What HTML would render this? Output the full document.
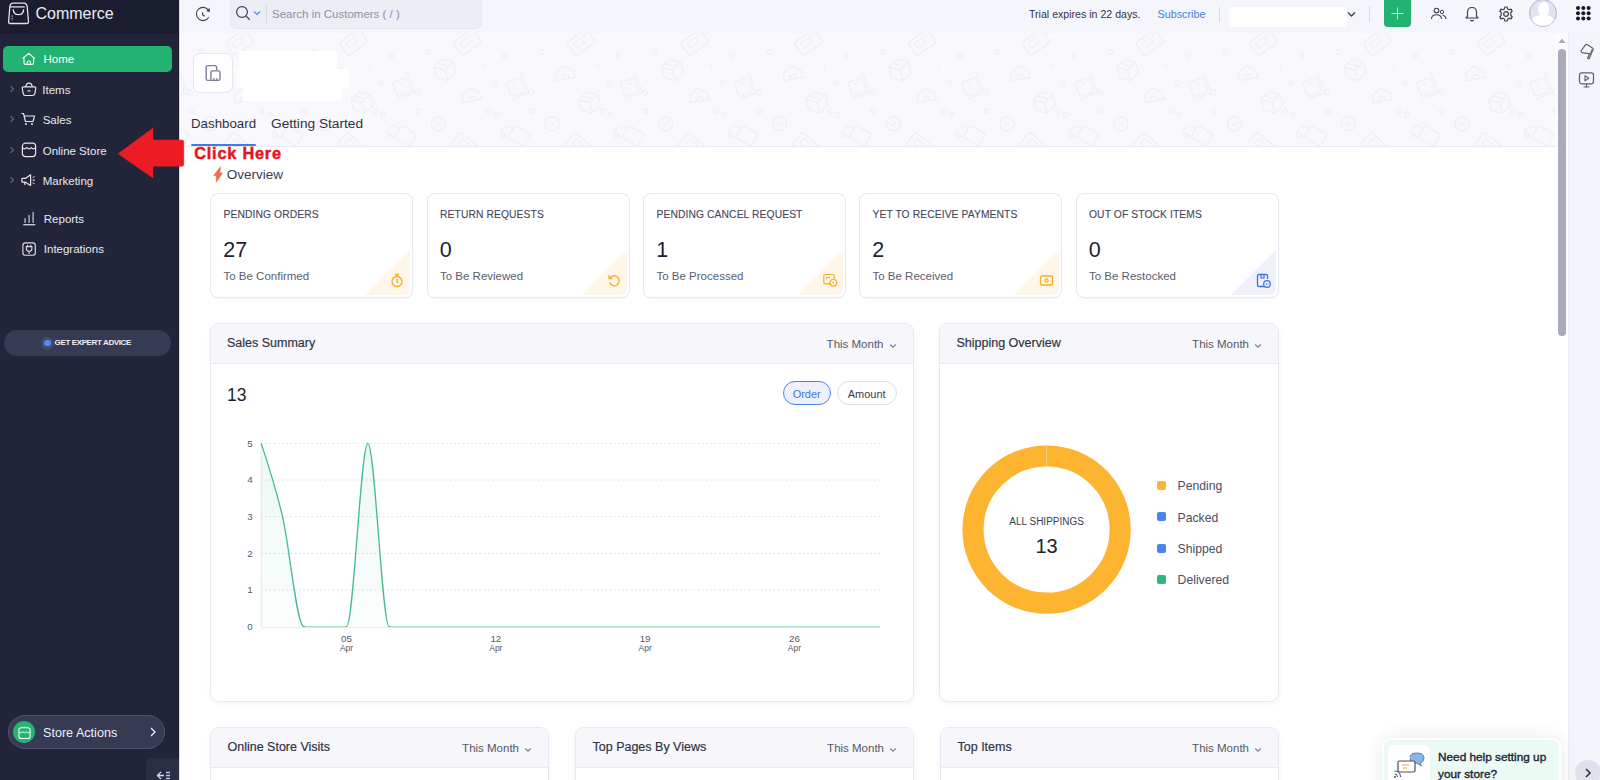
<!DOCTYPE html>
<html><head><meta charset="utf-8"><style>
html,body{margin:0;padding:0;width:1600px;height:780px;overflow:hidden;background:#fff;font-family:"Liberation Sans", sans-serif;}
.t{position:absolute;line-height:1;white-space:nowrap;}
svg{display:block}
</style></head><body>
<div style="position:absolute;left:180px;top:0px;width:1420px;height:33px;background:#f5f6fb;"></div><div style="position:absolute;left:180px;top:33px;width:1388px;height:114px;background:#f9f9fd;"></div><div style="position:absolute;left:180px;top:146px;width:1376px;height:1px;background:#e9eaf2;"></div><div style="position:absolute;left:1568px;top:33px;width:32px;height:747px;background:#f4f5fb;"></div><div style="position:absolute;left:1568px;top:33px;width:1px;height:747px;background:#ebecf3;"></div><div style="position:absolute;left:0px;top:0px;width:179px;height:780px;background:#22253a;"></div><div style="position:absolute;left:0px;top:0px;width:179px;height:34px;background:#1a1c2f;"></div><div style="position:absolute;left:178px;top:0px;width:1px;height:780px;background:#171a2b;"></div><div style="position:absolute;left:179px;top:0px;width:1px;height:780px;background:#dcdee6;"></div><svg style="position:absolute;left:4px;top:0px;" width="30" height="28" viewBox="0 0 30 28" fill="none"><path d="M5.8 6.9 Q6.2 3.1 9.2 3.1 H20 Q22.6 3.1 23.2 6.5 L24.5 21.7 Q24.6 23.5 22.7 23.5 H6.2 Q4.4 23.5 4.6 21.7 L5.8 6.9" stroke="#dfe0e8" stroke-width="1.3" stroke-linejoin="round"/><path d="M5.8 6.9 H20.8" stroke="#dfe0e8" stroke-width="1.3"/><path d="M9.2 9.2 Q9.4 14.6 14.5 14.6 Q19.6 14.6 19.6 9.2" stroke="#dfe0e8" stroke-width="1.3"/><path d="M8.1 15.4 V20.8" stroke="#dfe0e8" stroke-width="1" stroke-dasharray="1.3 1.2"/></svg><div class="t" style="left:35.5px;top:6.26px;font-size:16px;color:#eceef3;font-weight:400;">Commerce</div><div style="position:absolute;left:3px;top:46px;width:169px;height:26px;background:#24b273;border-radius:5px;"></div><svg style="position:absolute;left:22px;top:52px;" width="14" height="14" viewBox="0 0 14 14" fill="none"><path d="M0.9 6.2 L6.8 1.4 L12.4 6.2" stroke="#f2fbf6" stroke-width="1.15" stroke-linejoin="round" stroke-linecap="round"/><path d="M2 5.4 V10.8 Q2 12.4 3.6 12.4 H10 Q11.6 12.4 11.6 10.8 V5.4" stroke="#f2fbf6" stroke-width="1.15"/><path d="M5.2 12.4 V10.6 Q5.2 9 6.8 9 Q8.4 9 8.4 10.6 V12.4" stroke="#f2fbf6" stroke-width="1.1"/></svg><div class="t" style="left:43.5px;top:54.07px;font-size:11.5px;color:#ffffff;font-weight:400;">Home</div><svg style="position:absolute;left:9px;top:85px;" width="6" height="8" viewBox="0 0 6 8" fill="none"><path d="M1.5 1 L4.5 4 L1.5 7" stroke="#8b8ea3" stroke-width="1"/></svg><svg style="position:absolute;left:20.5px;top:82px;" width="16" height="15" viewBox="0 0 16 15" fill="none"><path d="M1.2 6 Q1.2 4.8 2.4 4.8 H13.6 Q14.8 4.8 14.8 6 L13.8 11.6 Q13.4 13.5 11.6 13.5 H4.4 Q2.6 13.5 2.2 11.6 Z" stroke="#e6e7ee" stroke-width="1.2" stroke-linejoin="round"/><path d="M4.8 4.8 Q5.2 1.2 8 1.2 Q10.8 1.2 11.2 4.8" stroke="#e6e7ee" stroke-width="1.2"/><path d="M6.6 8.9 H9.4" stroke="#e6e7ee" stroke-width="1.2"/></svg><div class="t" style="left:42.3px;top:84.57px;font-size:11.5px;color:#e8e9ef;font-weight:400;">Items</div><svg style="position:absolute;left:9px;top:115px;" width="6" height="8" viewBox="0 0 6 8" fill="none"><path d="M1.5 1 L4.5 4 L1.5 7" stroke="#8b8ea3" stroke-width="1"/></svg><svg style="position:absolute;left:21px;top:112px;" width="15" height="14" viewBox="0 0 15 14" fill="none"><path d="M0.5 1.5 H2.5 L4.5 9.5 H12 L13.5 4 H3.5" stroke="#e6e7ee" stroke-width="1.2" stroke-linejoin="round"/><circle cx="5" cy="12" r="1" fill="#e6e7ee"/><circle cx="11" cy="12" r="1" fill="#e6e7ee"/></svg><div class="t" style="left:42.7px;top:115.07px;font-size:11.5px;color:#e8e9ef;font-weight:400;">Sales</div><svg style="position:absolute;left:9px;top:146px;" width="6" height="8" viewBox="0 0 6 8" fill="none"><path d="M1.5 1 L4.5 4 L1.5 7" stroke="#8b8ea3" stroke-width="1"/></svg><svg style="position:absolute;left:20.5px;top:142px;" width="16" height="16" viewBox="0 0 16 16" fill="none"><rect x="1.4" y="1.2" width="13.2" height="13.4" rx="3" stroke="#e6e7ee" stroke-width="1.2"/><path d="M1.4 5.6 Q3.6 8.2 5.8 5.6 Q8 8.2 10.2 5.6 Q12.4 8.2 14.6 5.6" stroke="#e6e7ee" stroke-width="1.1"/></svg><div class="t" style="left:42.7px;top:146.07px;font-size:11.5px;color:#e8e9ef;font-weight:400;">Online Store</div><svg style="position:absolute;left:9px;top:176px;" width="6" height="8" viewBox="0 0 6 8" fill="none"><path d="M1.5 1 L4.5 4 L1.5 7" stroke="#8b8ea3" stroke-width="1"/></svg><svg style="position:absolute;left:21px;top:173px;" width="16" height="14" viewBox="0 0 16 14" fill="none"><path d="M1.6 5.4 H4.4 L9.6 1.8 V12.6 L4.4 9.2 H1.6 Q0.9 9.2 0.9 8.5 V6.1 Q0.9 5.4 1.6 5.4 Z" stroke="#e6e7ee" stroke-width="1.2" stroke-linejoin="round"/><path d="M3.2 9.2 L4.2 12" stroke="#e6e7ee" stroke-width="1.1"/><path d="M11.6 4.6 L13.6 3.6 M11.6 7.2 H14 M11.6 9.8 L13.6 10.8" stroke="#e6e7ee" stroke-width="1"/></svg><div class="t" style="left:42.7px;top:176.07px;font-size:11.5px;color:#e8e9ef;font-weight:400;">Marketing</div><svg style="position:absolute;left:21.5px;top:211px;" width="15" height="15" viewBox="0 0 15 15" fill="none"><path d="M3.1 11.5 V7.6 M7.1 11.5 V4.3 M11.1 11.5 V1.2" stroke="#d9dbe6" stroke-width="1.1" stroke-linecap="round"/><path d="M1.3 13.7 H13.2" stroke="#d9dbe6" stroke-width="1.3"/></svg><div class="t" style="left:43.8px;top:214.27px;font-size:11.5px;color:#e8e9ef;font-weight:400;">Reports</div><svg style="position:absolute;left:21.6px;top:241.6px;" width="15" height="15" viewBox="0 0 15 15" fill="none"><rect x="0.9" y="0.9" width="12.4" height="12.4" rx="2.6" stroke="#d9dbe6" stroke-width="1.15"/><path d="M4.3 4.6 H9.9 V6.6 Q9.9 9.4 7.1 9.4 Q4.3 9.4 4.3 6.6 Z M5.5 4.6 V2.8 M8.7 4.6 V2.8 M7.1 9.4 V12" stroke="#d9dbe6" stroke-width="1.1"/></svg><div class="t" style="left:43.8px;top:244.27px;font-size:11.5px;color:#e8e9ef;font-weight:400;">Integrations</div><div style="position:absolute;left:4px;top:330px;width:167px;height:26px;background:#363a52;border-radius:13px;"></div><div style="position:absolute;left:40.5px;top:336.5px;width:13px;height:13px;background:#454a66;border-radius:50%;"></div><div style="position:absolute;left:44px;top:339.5px;width:6.5px;height:6.5px;background:#4f8ef7;border-radius:50%;"></div><div class="t" style="left:54.6px;top:339.33px;font-size:8px;color:#eef0f5;font-weight:700;letter-spacing:-0.38px;">GET EXPERT ADVICE</div><div style="position:absolute;left:8px;top:715px;width:156.5px;height:33.5px;background:#363a52;border:1px solid #50546c;border-radius:17px;box-sizing:border-box;"></div><div style="position:absolute;left:13px;top:721px;width:22px;height:22px;background:#25b373;border-radius:50%;"></div><svg style="position:absolute;left:17px;top:725px;" width="15" height="15" viewBox="0 0 15 15" fill="none"><rect x="1.9" y="2.7" width="11.2" height="10.8" rx="2.3" stroke="#eefaf3" stroke-width="1.1"/><path d="M1.9 6.8 Q3.8 9 5.6 6.8 Q7.5 9 9.4 6.8 Q11.3 9 13.1 6.8" stroke="#eefaf3" stroke-width="1"/><path d="M5 1.6 V2.7 M7.5 1.6 V2.7 M10 1.6 V2.7" stroke="#eefaf3" stroke-width="0.7"/></svg><div class="t" style="left:43px;top:726.53px;font-size:12.6px;color:#eef0f5;font-weight:400;">Store Actions</div><svg style="position:absolute;left:149px;top:727px;" width="8" height="10" viewBox="0 0 8 10" fill="none"><path d="M2 1 L6 5 L2 9" stroke="#eef0f5" stroke-width="1.3"/></svg><div style="position:absolute;left:146px;top:758px;width:33px;height:22px;background:#2a2d44;border-radius:6px 0 0 0;"></div><svg style="position:absolute;left:156px;top:771px;" width="15" height="9" viewBox="0 0 15 9" fill="none"><path d="M5 1 L1.5 4.5 L5 8 M1.5 4.5 H8" stroke="#d5d8e6" stroke-width="1.3"/><path d="M10 1.5 H14 M10 4.5 H14 M10 7.5 H14" stroke="#b8c3e6" stroke-width="1.3"/></svg><svg style="position:absolute;left:195px;top:6px;" width="17" height="17" viewBox="0 0 17 17" fill="none"><path d="M13.75 11.25 A6.6 6.6 0 1 1 13.4 4.1" stroke="#3d4052" stroke-width="1.15"/><path d="M14.8 1.7 L14.8 5.9 L11.2 5.2 Z" fill="#3d4052"/><path d="M7.5 6.4 L7.75 9 L9.6 10.3" stroke="#3d4052" stroke-width="1.2"/></svg><div style="position:absolute;left:230px;top:0px;width:252px;height:29px;background:#eceef6;border-radius:0 0 7px 7px;border:1px solid #e3e5ef;border-top:none;box-sizing:border-box;"></div><svg style="position:absolute;left:235px;top:5px;" width="17" height="17" viewBox="0 0 17 17" fill="none"><circle cx="7" cy="7" r="5.4" stroke="#3d4052" stroke-width="1.2"/><path d="M10.9 10.9 L14.7 14.7" stroke="#3d4052" stroke-width="1.25"/></svg><svg style="position:absolute;left:253px;top:10px;" width="8" height="6" viewBox="0 0 8 6" fill="none"><path d="M1 1.5 L4 4.5 L7 1.5" stroke="#4a86e8" stroke-width="1.1"/></svg><div style="position:absolute;left:266px;top:5px;width:1px;height:18px;background:#d6d8e4;"></div><div class="t" style="left:272px;top:9.07px;font-size:11.5px;color:#8d90a2;font-weight:400;">Search in Customers ( / )</div><div class="t" style="left:1029px;top:9.43px;font-size:10.6px;color:#30334a;font-weight:400;">Trial expires in 22 days.</div><div class="t" style="left:1157.5px;top:9.26px;font-size:10.8px;color:#3d7fe0;font-weight:400;">Subscribe</div><div style="position:absolute;left:1219px;top:7px;width:1px;height:15px;background:#d8dae6;"></div><div style="position:absolute;left:1229px;top:7px;width:118px;height:20px;background:#ffffff;border-radius:2px;"></div><svg style="position:absolute;left:1347px;top:11px;" width="9" height="7" viewBox="0 0 9 7" fill="none"><path d="M1 1.5 L4.5 5 L8 1.5" stroke="#3d4052" stroke-width="1.3"/></svg><div style="position:absolute;left:1369px;top:6px;width:1px;height:16px;background:#d8dae6;"></div><div style="position:absolute;left:1384px;top:0px;width:27px;height:27px;background:#24b273;border-radius:0 0 4px 4px;"></div><svg style="position:absolute;left:1390px;top:6px;" width="15" height="15" viewBox="0 0 15 15" fill="none"><path d="M7.5 1.5 V13.5 M1.5 7.5 H13.5" stroke="#d8f5e6" stroke-width="0.9"/></svg><svg style="position:absolute;left:1430px;top:6px;" width="17" height="15" viewBox="0 0 17 15" fill="none"><circle cx="6.5" cy="4.5" r="2.3" stroke="#3d4052" stroke-width="1.1"/><path d="M1.5 13 Q1.5 8.8 6.5 8.8 Q11.5 8.8 11.5 13" stroke="#3d4052" stroke-width="1.1"/><circle cx="12" cy="6" r="1.7" stroke="#3d4052" stroke-width="1"/><path d="M12.5 9.3 Q15.8 9.6 15.8 13" stroke="#3d4052" stroke-width="1.1"/></svg><svg style="position:absolute;left:1464px;top:5px;" width="16" height="17" viewBox="0 0 16 17" fill="none"><path d="M3.5 11.5 V7.5 Q3.5 2.5 8 2.5 Q12.5 2.5 12.5 7.5 V11.5 L14 13 H2 Z" stroke="#3d4052" stroke-width="1.15" stroke-linejoin="round"/><path d="M6.3 15 Q8 16.6 9.7 15" stroke="#3d4052" stroke-width="1.15"/></svg><svg style="position:absolute;left:1498px;top:6px;" width="16" height="16" viewBox="0 0 16 16" fill="none"><circle cx="8" cy="8" r="2.3" stroke="#3d4052" stroke-width="1.3"/><path d="M6.8 1 H9.2 L9.6 2.9 L11.2 3.8 L13 3.1 L14.2 5.2 L12.8 6.5 V9.5 L14.2 10.8 L13 12.9 L11.2 12.2 L9.6 13.1 L9.2 15 H6.8 L6.4 13.1 L4.8 12.2 L3 12.9 L1.8 10.8 L3.2 9.5 V6.5 L1.8 5.2 L3 3.1 L4.8 3.8 L6.4 2.9 Z" stroke="#3d4052" stroke-width="1.2" stroke-linejoin="round"/></svg><div style="position:absolute;left:1529px;top:-1px;width:28px;height:28px;border-radius:50%;background:#dfe4ee;border:1px solid #b3b8c8;box-sizing:border-box;overflow:hidden"><div style="position:absolute;left:7.5px;top:2px;width:11px;height:15px;border-radius:50%;background:#fff"></div><div style="position:absolute;left:1px;top:15px;width:24px;height:16px;border-radius:45% 45% 0 0;background:#fff"></div></div><svg style="position:absolute;left:1576px;top:6px;" width="15" height="15" viewBox="0 0 15 15" fill="none"><circle cx="2.0" cy="2.0" r="2" fill="#15172a"/><circle cx="2.0" cy="7.3" r="2" fill="#15172a"/><circle cx="2.0" cy="12.6" r="2" fill="#15172a"/><circle cx="7.3" cy="2.0" r="2" fill="#15172a"/><circle cx="7.3" cy="7.3" r="2" fill="#15172a"/><circle cx="7.3" cy="12.6" r="2" fill="#15172a"/><circle cx="12.6" cy="2.0" r="2" fill="#15172a"/><circle cx="12.6" cy="7.3" r="2" fill="#15172a"/><circle cx="12.6" cy="12.6" r="2" fill="#15172a"/></svg><svg style="position:absolute;left:1579px;top:43px;" width="16" height="17" viewBox="0 0 16 17" fill="none"><path d="M2.3 7.5 L6.5 1.8 Q7.2 1.2 8 1.6 L13.8 5.2 Q14.6 5.8 14.1 6.7 L12.2 10.4 Q11.8 11 11 10.9 L3.2 9.6 Q1.7 9.2 2.3 7.5 Z" stroke="#5b5e72" stroke-width="1.2" stroke-linejoin="round"/><path d="M13.2 6.5 L11.6 10.6 M10.5 11 L8.8 14.6 Q8.5 15.6 9.5 15.6 Q10.3 15.6 10.6 14.8 L12.2 11" stroke="#5b5e72" stroke-width="1.2" stroke-linejoin="round"/></svg><svg style="position:absolute;left:1578px;top:71px;" width="17" height="18" viewBox="0 0 17 18" fill="none"><rect x="1.5" y="1.8" width="14" height="11" rx="2.2" stroke="#5b5e72" stroke-width="1.2"/><path d="M7 4.8 L10.8 7.3 L7 9.8 Z" stroke="#5b5e72" stroke-width="1.1" stroke-linejoin="round"/><path d="M8.5 12.8 V15.8 M5.5 16 H11.5" stroke="#5b5e72" stroke-width="1.2"/></svg><div style="position:absolute;left:1555px;top:33px;width:13px;height:114px;background:#fcfcfe;"></div><svg style="position:absolute;left:1558px;top:38px;" width="8" height="6" viewBox="0 0 8 6" fill="none"><path d="M4 0.5 L7.5 5 H0.5 Z" fill="#a9abb8"/></svg><div style="position:absolute;left:1558px;top:48.5px;width:8px;height:287px;background:#a9abb9;border-radius:4px;"></div><svg style="position:absolute;left:180px;top:33px" width="1376" height="113" fill="none"><g transform="translate(-111.0,0)"><g transform="translate(-170.5,9.5) rotate(-35)"><rect x="-12" y="-8" width="24" height="16" rx="2.5" stroke="#efeff8" stroke-width="1.4"/><rect x="-7" y="-4" width="10" height="6" rx="1" stroke="#efeff8" stroke-width="1.2"/><path d="M5 -4 H9" stroke="#efeff8" stroke-width="1.2"/></g><circle cx="-132.75" cy="22.75" r="2.3" stroke="#efeff8" stroke-width="1.2"/><circle cx="-209.5" cy="19" r="2.3" stroke="#efeff8" stroke-width="1.2"/><path d="M-157.5 31 Q-152.5 31 -153.5 37" stroke="#efeff8" stroke-width="1.2"/><g transform="translate(-119.0,54.5) rotate(-20)"><rect x="-10" y="-9" width="15" height="15" rx="2" stroke="#efeff8" stroke-width="1.3"/><path d="M7 -16 L8 8 L-11 9 M-5 -5 H0" stroke="#efeff8" stroke-width="1.3"/><circle cx="10" cy="9" r="2.5" stroke="#efeff8" stroke-width="1.2"/></g><circle cx="-142.75" cy="50.25" r="2.3" stroke="#efeff8" stroke-width="1.2"/><circle cx="-141.0" cy="81.5" r="2.3" stroke="#efeff8" stroke-width="1.2"/><circle cx="-219.75" cy="78.25" r="2.3" stroke="#efeff8" stroke-width="1.2"/><circle cx="-149.0" cy="78.5" r="2.3" stroke="#efeff8" stroke-width="1.2"/><circle cx="-199.5" cy="90.75" r="7" stroke="#efeff8" stroke-width="1.3"/><path d="M-202.5 90.75 L-200.5 92.75 L-196.5 88.75" stroke="#efeff8" stroke-width="1.2"/><g transform="translate(-121.5,102) rotate(30)"><rect x="-6" y="-8" width="18" height="14" rx="2" stroke="#efeff8" stroke-width="1.3"/><path d="M-6 -4 H-12 L-15 1 V6 H-6" stroke="#efeff8" stroke-width="1.3"/><circle cx="-11" cy="7" r="2.5" stroke="#efeff8" stroke-width="1.2"/></g><g transform="translate(-172.75,113) rotate(40)"><rect x="-12" y="-8" width="24" height="16" rx="2.5" stroke="#efeff8" stroke-width="1.4"/><rect x="-7" y="-4" width="10" height="6" rx="1" stroke="#efeff8" stroke-width="1.2"/><path d="M5 -4 H9" stroke="#efeff8" stroke-width="1.2"/></g><g transform="translate(-56.75,9.5) rotate(-35)"><rect x="-12" y="-8" width="24" height="16" rx="2.5" stroke="#efeff8" stroke-width="1.4"/><rect x="-7" y="-4" width="10" height="6" rx="1" stroke="#efeff8" stroke-width="1.2"/><path d="M5 -4 H9" stroke="#efeff8" stroke-width="1.2"/></g><circle cx="-19.0" cy="22.75" r="2.3" stroke="#efeff8" stroke-width="1.2"/><circle cx="-95.75" cy="19" r="2.3" stroke="#efeff8" stroke-width="1.2"/><path d="M-43.75 31 Q-38.75 31 -39.75 37" stroke="#efeff8" stroke-width="1.2"/><g transform="translate(-5.25,54.5) rotate(-20)"><rect x="-10" y="-9" width="15" height="15" rx="2" stroke="#efeff8" stroke-width="1.3"/><path d="M7 -16 L8 8 L-11 9 M-5 -5 H0" stroke="#efeff8" stroke-width="1.3"/><circle cx="10" cy="9" r="2.5" stroke="#efeff8" stroke-width="1.2"/></g><circle cx="-29.0" cy="50.25" r="2.3" stroke="#efeff8" stroke-width="1.2"/><circle cx="-27.25" cy="81.5" r="2.3" stroke="#efeff8" stroke-width="1.2"/><circle cx="-106.0" cy="78.25" r="2.3" stroke="#efeff8" stroke-width="1.2"/><circle cx="-35.25" cy="78.5" r="2.3" stroke="#efeff8" stroke-width="1.2"/><circle cx="-85.75" cy="90.75" r="7" stroke="#efeff8" stroke-width="1.3"/><path d="M-88.75 90.75 L-86.75 92.75 L-82.75 88.75" stroke="#efeff8" stroke-width="1.2"/><g transform="translate(-7.75,102) rotate(30)"><rect x="-6" y="-8" width="18" height="14" rx="2" stroke="#efeff8" stroke-width="1.3"/><path d="M-6 -4 H-12 L-15 1 V6 H-6" stroke="#efeff8" stroke-width="1.3"/><circle cx="-11" cy="7" r="2.5" stroke="#efeff8" stroke-width="1.2"/></g><g transform="translate(-59.0,113) rotate(40)"><rect x="-12" y="-8" width="24" height="16" rx="2.5" stroke="#efeff8" stroke-width="1.4"/><rect x="-7" y="-4" width="10" height="6" rx="1" stroke="#efeff8" stroke-width="1.2"/><path d="M5 -4 H9" stroke="#efeff8" stroke-width="1.2"/></g><g transform="translate(-186.5,41) rotate(-10)"><path d="M-9 5 V-2 L0 -8 L9 -2 V5 M-11 5 H11 M-3 5 V1 H3 V5" stroke="#efeff8" stroke-width="1.3"/></g><g transform="translate(-79.0,37) rotate(-15)"><path d="M0 -11 L10 -5.5 V5.5 L0 11 L-10 5.5 V-5.5 Z M-10 -5.5 L0 0 L10 -5.5 M0 0 V11 M-5 -8 L5 -2.5" stroke="#efeff8" stroke-width="1.3" stroke-linejoin="round"/></g><g transform="translate(-162.0,69.5) rotate(-15)"><path d="M0 -11 L10 -5.5 V5.5 L0 11 L-10 5.5 V-5.5 Z M-10 -5.5 L0 0 L10 -5.5 M0 0 V11 M-5 -8 L5 -2.5" stroke="#efeff8" stroke-width="1.3" stroke-linejoin="round"/></g><g transform="translate(-52.75,63) rotate(-10)"><path d="M-9 5 V-2 L0 -8 L9 -2 V5 M-11 5 H11 M-3 5 V1 H3 V5" stroke="#efeff8" stroke-width="1.3"/></g><g transform="translate(57.0,9.5) rotate(-35)"><rect x="-12" y="-8" width="24" height="16" rx="2.5" stroke="#efeff8" stroke-width="1.4"/><rect x="-7" y="-4" width="10" height="6" rx="1" stroke="#efeff8" stroke-width="1.2"/><path d="M5 -4 H9" stroke="#efeff8" stroke-width="1.2"/></g><circle cx="94.75" cy="22.75" r="2.3" stroke="#efeff8" stroke-width="1.2"/><circle cx="18.0" cy="19" r="2.3" stroke="#efeff8" stroke-width="1.2"/><path d="M70.0 31 Q75.0 31 74.0 37" stroke="#efeff8" stroke-width="1.2"/><g transform="translate(108.5,54.5) rotate(-20)"><rect x="-10" y="-9" width="15" height="15" rx="2" stroke="#efeff8" stroke-width="1.3"/><path d="M7 -16 L8 8 L-11 9 M-5 -5 H0" stroke="#efeff8" stroke-width="1.3"/><circle cx="10" cy="9" r="2.5" stroke="#efeff8" stroke-width="1.2"/></g><circle cx="84.75" cy="50.25" r="2.3" stroke="#efeff8" stroke-width="1.2"/><circle cx="86.5" cy="81.5" r="2.3" stroke="#efeff8" stroke-width="1.2"/><circle cx="7.75" cy="78.25" r="2.3" stroke="#efeff8" stroke-width="1.2"/><circle cx="78.5" cy="78.5" r="2.3" stroke="#efeff8" stroke-width="1.2"/><circle cx="28.0" cy="90.75" r="7" stroke="#efeff8" stroke-width="1.3"/><path d="M25.0 90.75 L27.0 92.75 L31.0 88.75" stroke="#efeff8" stroke-width="1.2"/><g transform="translate(106.0,102) rotate(30)"><rect x="-6" y="-8" width="18" height="14" rx="2" stroke="#efeff8" stroke-width="1.3"/><path d="M-6 -4 H-12 L-15 1 V6 H-6" stroke="#efeff8" stroke-width="1.3"/><circle cx="-11" cy="7" r="2.5" stroke="#efeff8" stroke-width="1.2"/></g><g transform="translate(54.75,113) rotate(40)"><rect x="-12" y="-8" width="24" height="16" rx="2.5" stroke="#efeff8" stroke-width="1.4"/><rect x="-7" y="-4" width="10" height="6" rx="1" stroke="#efeff8" stroke-width="1.2"/><path d="M5 -4 H9" stroke="#efeff8" stroke-width="1.2"/></g><g transform="translate(170.75,9.5) rotate(-35)"><rect x="-12" y="-8" width="24" height="16" rx="2.5" stroke="#efeff8" stroke-width="1.4"/><rect x="-7" y="-4" width="10" height="6" rx="1" stroke="#efeff8" stroke-width="1.2"/><path d="M5 -4 H9" stroke="#efeff8" stroke-width="1.2"/></g><circle cx="208.5" cy="22.75" r="2.3" stroke="#efeff8" stroke-width="1.2"/><circle cx="131.75" cy="19" r="2.3" stroke="#efeff8" stroke-width="1.2"/><path d="M183.75 31 Q188.75 31 187.75 37" stroke="#efeff8" stroke-width="1.2"/><g transform="translate(222.25,54.5) rotate(-20)"><rect x="-10" y="-9" width="15" height="15" rx="2" stroke="#efeff8" stroke-width="1.3"/><path d="M7 -16 L8 8 L-11 9 M-5 -5 H0" stroke="#efeff8" stroke-width="1.3"/><circle cx="10" cy="9" r="2.5" stroke="#efeff8" stroke-width="1.2"/></g><circle cx="198.5" cy="50.25" r="2.3" stroke="#efeff8" stroke-width="1.2"/><circle cx="200.25" cy="81.5" r="2.3" stroke="#efeff8" stroke-width="1.2"/><circle cx="121.5" cy="78.25" r="2.3" stroke="#efeff8" stroke-width="1.2"/><circle cx="192.25" cy="78.5" r="2.3" stroke="#efeff8" stroke-width="1.2"/><circle cx="141.75" cy="90.75" r="7" stroke="#efeff8" stroke-width="1.3"/><path d="M138.75 90.75 L140.75 92.75 L144.75 88.75" stroke="#efeff8" stroke-width="1.2"/><g transform="translate(219.75,102) rotate(30)"><rect x="-6" y="-8" width="18" height="14" rx="2" stroke="#efeff8" stroke-width="1.3"/><path d="M-6 -4 H-12 L-15 1 V6 H-6" stroke="#efeff8" stroke-width="1.3"/><circle cx="-11" cy="7" r="2.5" stroke="#efeff8" stroke-width="1.2"/></g><g transform="translate(168.5,113) rotate(40)"><rect x="-12" y="-8" width="24" height="16" rx="2.5" stroke="#efeff8" stroke-width="1.4"/><rect x="-7" y="-4" width="10" height="6" rx="1" stroke="#efeff8" stroke-width="1.2"/><path d="M5 -4 H9" stroke="#efeff8" stroke-width="1.2"/></g><g transform="translate(41.0,41) rotate(-10)"><path d="M-9 5 V-2 L0 -8 L9 -2 V5 M-11 5 H11 M-3 5 V1 H3 V5" stroke="#efeff8" stroke-width="1.3"/></g><g transform="translate(148.5,37) rotate(-15)"><path d="M0 -11 L10 -5.5 V5.5 L0 11 L-10 5.5 V-5.5 Z M-10 -5.5 L0 0 L10 -5.5 M0 0 V11 M-5 -8 L5 -2.5" stroke="#efeff8" stroke-width="1.3" stroke-linejoin="round"/></g><g transform="translate(65.5,69.5) rotate(-15)"><path d="M0 -11 L10 -5.5 V5.5 L0 11 L-10 5.5 V-5.5 Z M-10 -5.5 L0 0 L10 -5.5 M0 0 V11 M-5 -8 L5 -2.5" stroke="#efeff8" stroke-width="1.3" stroke-linejoin="round"/></g><g transform="translate(174.75,63) rotate(-10)"><path d="M-9 5 V-2 L0 -8 L9 -2 V5 M-11 5 H11 M-3 5 V1 H3 V5" stroke="#efeff8" stroke-width="1.3"/></g><g transform="translate(284.5,9.5) rotate(-35)"><rect x="-12" y="-8" width="24" height="16" rx="2.5" stroke="#efeff8" stroke-width="1.4"/><rect x="-7" y="-4" width="10" height="6" rx="1" stroke="#efeff8" stroke-width="1.2"/><path d="M5 -4 H9" stroke="#efeff8" stroke-width="1.2"/></g><circle cx="322.25" cy="22.75" r="2.3" stroke="#efeff8" stroke-width="1.2"/><circle cx="245.5" cy="19" r="2.3" stroke="#efeff8" stroke-width="1.2"/><path d="M297.5 31 Q302.5 31 301.5 37" stroke="#efeff8" stroke-width="1.2"/><g transform="translate(336.0,54.5) rotate(-20)"><rect x="-10" y="-9" width="15" height="15" rx="2" stroke="#efeff8" stroke-width="1.3"/><path d="M7 -16 L8 8 L-11 9 M-5 -5 H0" stroke="#efeff8" stroke-width="1.3"/><circle cx="10" cy="9" r="2.5" stroke="#efeff8" stroke-width="1.2"/></g><circle cx="312.25" cy="50.25" r="2.3" stroke="#efeff8" stroke-width="1.2"/><circle cx="314.0" cy="81.5" r="2.3" stroke="#efeff8" stroke-width="1.2"/><circle cx="235.25" cy="78.25" r="2.3" stroke="#efeff8" stroke-width="1.2"/><circle cx="306.0" cy="78.5" r="2.3" stroke="#efeff8" stroke-width="1.2"/><circle cx="255.5" cy="90.75" r="7" stroke="#efeff8" stroke-width="1.3"/><path d="M252.5 90.75 L254.5 92.75 L258.5 88.75" stroke="#efeff8" stroke-width="1.2"/><g transform="translate(333.5,102) rotate(30)"><rect x="-6" y="-8" width="18" height="14" rx="2" stroke="#efeff8" stroke-width="1.3"/><path d="M-6 -4 H-12 L-15 1 V6 H-6" stroke="#efeff8" stroke-width="1.3"/><circle cx="-11" cy="7" r="2.5" stroke="#efeff8" stroke-width="1.2"/></g><g transform="translate(282.25,113) rotate(40)"><rect x="-12" y="-8" width="24" height="16" rx="2.5" stroke="#efeff8" stroke-width="1.4"/><rect x="-7" y="-4" width="10" height="6" rx="1" stroke="#efeff8" stroke-width="1.2"/><path d="M5 -4 H9" stroke="#efeff8" stroke-width="1.2"/></g><g transform="translate(398.25,9.5) rotate(-35)"><rect x="-12" y="-8" width="24" height="16" rx="2.5" stroke="#efeff8" stroke-width="1.4"/><rect x="-7" y="-4" width="10" height="6" rx="1" stroke="#efeff8" stroke-width="1.2"/><path d="M5 -4 H9" stroke="#efeff8" stroke-width="1.2"/></g><circle cx="436.0" cy="22.75" r="2.3" stroke="#efeff8" stroke-width="1.2"/><circle cx="359.25" cy="19" r="2.3" stroke="#efeff8" stroke-width="1.2"/><path d="M411.25 31 Q416.25 31 415.25 37" stroke="#efeff8" stroke-width="1.2"/><g transform="translate(449.75,54.5) rotate(-20)"><rect x="-10" y="-9" width="15" height="15" rx="2" stroke="#efeff8" stroke-width="1.3"/><path d="M7 -16 L8 8 L-11 9 M-5 -5 H0" stroke="#efeff8" stroke-width="1.3"/><circle cx="10" cy="9" r="2.5" stroke="#efeff8" stroke-width="1.2"/></g><circle cx="426.0" cy="50.25" r="2.3" stroke="#efeff8" stroke-width="1.2"/><circle cx="427.75" cy="81.5" r="2.3" stroke="#efeff8" stroke-width="1.2"/><circle cx="349.0" cy="78.25" r="2.3" stroke="#efeff8" stroke-width="1.2"/><circle cx="419.75" cy="78.5" r="2.3" stroke="#efeff8" stroke-width="1.2"/><circle cx="369.25" cy="90.75" r="7" stroke="#efeff8" stroke-width="1.3"/><path d="M366.25 90.75 L368.25 92.75 L372.25 88.75" stroke="#efeff8" stroke-width="1.2"/><g transform="translate(447.25,102) rotate(30)"><rect x="-6" y="-8" width="18" height="14" rx="2" stroke="#efeff8" stroke-width="1.3"/><path d="M-6 -4 H-12 L-15 1 V6 H-6" stroke="#efeff8" stroke-width="1.3"/><circle cx="-11" cy="7" r="2.5" stroke="#efeff8" stroke-width="1.2"/></g><g transform="translate(396.0,113) rotate(40)"><rect x="-12" y="-8" width="24" height="16" rx="2.5" stroke="#efeff8" stroke-width="1.4"/><rect x="-7" y="-4" width="10" height="6" rx="1" stroke="#efeff8" stroke-width="1.2"/><path d="M5 -4 H9" stroke="#efeff8" stroke-width="1.2"/></g><g transform="translate(268.5,41) rotate(-10)"><path d="M-9 5 V-2 L0 -8 L9 -2 V5 M-11 5 H11 M-3 5 V1 H3 V5" stroke="#efeff8" stroke-width="1.3"/></g><g transform="translate(376.0,37) rotate(-15)"><path d="M0 -11 L10 -5.5 V5.5 L0 11 L-10 5.5 V-5.5 Z M-10 -5.5 L0 0 L10 -5.5 M0 0 V11 M-5 -8 L5 -2.5" stroke="#efeff8" stroke-width="1.3" stroke-linejoin="round"/></g><g transform="translate(293.0,69.5) rotate(-15)"><path d="M0 -11 L10 -5.5 V5.5 L0 11 L-10 5.5 V-5.5 Z M-10 -5.5 L0 0 L10 -5.5 M0 0 V11 M-5 -8 L5 -2.5" stroke="#efeff8" stroke-width="1.3" stroke-linejoin="round"/></g><g transform="translate(402.25,63) rotate(-10)"><path d="M-9 5 V-2 L0 -8 L9 -2 V5 M-11 5 H11 M-3 5 V1 H3 V5" stroke="#efeff8" stroke-width="1.3"/></g><g transform="translate(512.0,9.5) rotate(-35)"><rect x="-12" y="-8" width="24" height="16" rx="2.5" stroke="#efeff8" stroke-width="1.4"/><rect x="-7" y="-4" width="10" height="6" rx="1" stroke="#efeff8" stroke-width="1.2"/><path d="M5 -4 H9" stroke="#efeff8" stroke-width="1.2"/></g><circle cx="549.75" cy="22.75" r="2.3" stroke="#efeff8" stroke-width="1.2"/><circle cx="473.0" cy="19" r="2.3" stroke="#efeff8" stroke-width="1.2"/><path d="M525.0 31 Q530.0 31 529.0 37" stroke="#efeff8" stroke-width="1.2"/><g transform="translate(563.5,54.5) rotate(-20)"><rect x="-10" y="-9" width="15" height="15" rx="2" stroke="#efeff8" stroke-width="1.3"/><path d="M7 -16 L8 8 L-11 9 M-5 -5 H0" stroke="#efeff8" stroke-width="1.3"/><circle cx="10" cy="9" r="2.5" stroke="#efeff8" stroke-width="1.2"/></g><circle cx="539.75" cy="50.25" r="2.3" stroke="#efeff8" stroke-width="1.2"/><circle cx="541.5" cy="81.5" r="2.3" stroke="#efeff8" stroke-width="1.2"/><circle cx="462.75" cy="78.25" r="2.3" stroke="#efeff8" stroke-width="1.2"/><circle cx="533.5" cy="78.5" r="2.3" stroke="#efeff8" stroke-width="1.2"/><circle cx="483.0" cy="90.75" r="7" stroke="#efeff8" stroke-width="1.3"/><path d="M480.0 90.75 L482.0 92.75 L486.0 88.75" stroke="#efeff8" stroke-width="1.2"/><g transform="translate(561.0,102) rotate(30)"><rect x="-6" y="-8" width="18" height="14" rx="2" stroke="#efeff8" stroke-width="1.3"/><path d="M-6 -4 H-12 L-15 1 V6 H-6" stroke="#efeff8" stroke-width="1.3"/><circle cx="-11" cy="7" r="2.5" stroke="#efeff8" stroke-width="1.2"/></g><g transform="translate(509.75,113) rotate(40)"><rect x="-12" y="-8" width="24" height="16" rx="2.5" stroke="#efeff8" stroke-width="1.4"/><rect x="-7" y="-4" width="10" height="6" rx="1" stroke="#efeff8" stroke-width="1.2"/><path d="M5 -4 H9" stroke="#efeff8" stroke-width="1.2"/></g><g transform="translate(625.75,9.5) rotate(-35)"><rect x="-12" y="-8" width="24" height="16" rx="2.5" stroke="#efeff8" stroke-width="1.4"/><rect x="-7" y="-4" width="10" height="6" rx="1" stroke="#efeff8" stroke-width="1.2"/><path d="M5 -4 H9" stroke="#efeff8" stroke-width="1.2"/></g><circle cx="663.5" cy="22.75" r="2.3" stroke="#efeff8" stroke-width="1.2"/><circle cx="586.75" cy="19" r="2.3" stroke="#efeff8" stroke-width="1.2"/><path d="M638.75 31 Q643.75 31 642.75 37" stroke="#efeff8" stroke-width="1.2"/><g transform="translate(677.25,54.5) rotate(-20)"><rect x="-10" y="-9" width="15" height="15" rx="2" stroke="#efeff8" stroke-width="1.3"/><path d="M7 -16 L8 8 L-11 9 M-5 -5 H0" stroke="#efeff8" stroke-width="1.3"/><circle cx="10" cy="9" r="2.5" stroke="#efeff8" stroke-width="1.2"/></g><circle cx="653.5" cy="50.25" r="2.3" stroke="#efeff8" stroke-width="1.2"/><circle cx="655.25" cy="81.5" r="2.3" stroke="#efeff8" stroke-width="1.2"/><circle cx="576.5" cy="78.25" r="2.3" stroke="#efeff8" stroke-width="1.2"/><circle cx="647.25" cy="78.5" r="2.3" stroke="#efeff8" stroke-width="1.2"/><circle cx="596.75" cy="90.75" r="7" stroke="#efeff8" stroke-width="1.3"/><path d="M593.75 90.75 L595.75 92.75 L599.75 88.75" stroke="#efeff8" stroke-width="1.2"/><g transform="translate(674.75,102) rotate(30)"><rect x="-6" y="-8" width="18" height="14" rx="2" stroke="#efeff8" stroke-width="1.3"/><path d="M-6 -4 H-12 L-15 1 V6 H-6" stroke="#efeff8" stroke-width="1.3"/><circle cx="-11" cy="7" r="2.5" stroke="#efeff8" stroke-width="1.2"/></g><g transform="translate(623.5,113) rotate(40)"><rect x="-12" y="-8" width="24" height="16" rx="2.5" stroke="#efeff8" stroke-width="1.4"/><rect x="-7" y="-4" width="10" height="6" rx="1" stroke="#efeff8" stroke-width="1.2"/><path d="M5 -4 H9" stroke="#efeff8" stroke-width="1.2"/></g><g transform="translate(496.0,41) rotate(-10)"><path d="M-9 5 V-2 L0 -8 L9 -2 V5 M-11 5 H11 M-3 5 V1 H3 V5" stroke="#efeff8" stroke-width="1.3"/></g><g transform="translate(603.5,37) rotate(-15)"><path d="M0 -11 L10 -5.5 V5.5 L0 11 L-10 5.5 V-5.5 Z M-10 -5.5 L0 0 L10 -5.5 M0 0 V11 M-5 -8 L5 -2.5" stroke="#efeff8" stroke-width="1.3" stroke-linejoin="round"/></g><g transform="translate(520.5,69.5) rotate(-15)"><path d="M0 -11 L10 -5.5 V5.5 L0 11 L-10 5.5 V-5.5 Z M-10 -5.5 L0 0 L10 -5.5 M0 0 V11 M-5 -8 L5 -2.5" stroke="#efeff8" stroke-width="1.3" stroke-linejoin="round"/></g><g transform="translate(629.75,63) rotate(-10)"><path d="M-9 5 V-2 L0 -8 L9 -2 V5 M-11 5 H11 M-3 5 V1 H3 V5" stroke="#efeff8" stroke-width="1.3"/></g><g transform="translate(739.5,9.5) rotate(-35)"><rect x="-12" y="-8" width="24" height="16" rx="2.5" stroke="#efeff8" stroke-width="1.4"/><rect x="-7" y="-4" width="10" height="6" rx="1" stroke="#efeff8" stroke-width="1.2"/><path d="M5 -4 H9" stroke="#efeff8" stroke-width="1.2"/></g><circle cx="777.25" cy="22.75" r="2.3" stroke="#efeff8" stroke-width="1.2"/><circle cx="700.5" cy="19" r="2.3" stroke="#efeff8" stroke-width="1.2"/><path d="M752.5 31 Q757.5 31 756.5 37" stroke="#efeff8" stroke-width="1.2"/><g transform="translate(791.0,54.5) rotate(-20)"><rect x="-10" y="-9" width="15" height="15" rx="2" stroke="#efeff8" stroke-width="1.3"/><path d="M7 -16 L8 8 L-11 9 M-5 -5 H0" stroke="#efeff8" stroke-width="1.3"/><circle cx="10" cy="9" r="2.5" stroke="#efeff8" stroke-width="1.2"/></g><circle cx="767.25" cy="50.25" r="2.3" stroke="#efeff8" stroke-width="1.2"/><circle cx="769.0" cy="81.5" r="2.3" stroke="#efeff8" stroke-width="1.2"/><circle cx="690.25" cy="78.25" r="2.3" stroke="#efeff8" stroke-width="1.2"/><circle cx="761.0" cy="78.5" r="2.3" stroke="#efeff8" stroke-width="1.2"/><circle cx="710.5" cy="90.75" r="7" stroke="#efeff8" stroke-width="1.3"/><path d="M707.5 90.75 L709.5 92.75 L713.5 88.75" stroke="#efeff8" stroke-width="1.2"/><g transform="translate(788.5,102) rotate(30)"><rect x="-6" y="-8" width="18" height="14" rx="2" stroke="#efeff8" stroke-width="1.3"/><path d="M-6 -4 H-12 L-15 1 V6 H-6" stroke="#efeff8" stroke-width="1.3"/><circle cx="-11" cy="7" r="2.5" stroke="#efeff8" stroke-width="1.2"/></g><g transform="translate(737.25,113) rotate(40)"><rect x="-12" y="-8" width="24" height="16" rx="2.5" stroke="#efeff8" stroke-width="1.4"/><rect x="-7" y="-4" width="10" height="6" rx="1" stroke="#efeff8" stroke-width="1.2"/><path d="M5 -4 H9" stroke="#efeff8" stroke-width="1.2"/></g><g transform="translate(853.25,9.5) rotate(-35)"><rect x="-12" y="-8" width="24" height="16" rx="2.5" stroke="#efeff8" stroke-width="1.4"/><rect x="-7" y="-4" width="10" height="6" rx="1" stroke="#efeff8" stroke-width="1.2"/><path d="M5 -4 H9" stroke="#efeff8" stroke-width="1.2"/></g><circle cx="891.0" cy="22.75" r="2.3" stroke="#efeff8" stroke-width="1.2"/><circle cx="814.25" cy="19" r="2.3" stroke="#efeff8" stroke-width="1.2"/><path d="M866.25 31 Q871.25 31 870.25 37" stroke="#efeff8" stroke-width="1.2"/><g transform="translate(904.75,54.5) rotate(-20)"><rect x="-10" y="-9" width="15" height="15" rx="2" stroke="#efeff8" stroke-width="1.3"/><path d="M7 -16 L8 8 L-11 9 M-5 -5 H0" stroke="#efeff8" stroke-width="1.3"/><circle cx="10" cy="9" r="2.5" stroke="#efeff8" stroke-width="1.2"/></g><circle cx="881.0" cy="50.25" r="2.3" stroke="#efeff8" stroke-width="1.2"/><circle cx="882.75" cy="81.5" r="2.3" stroke="#efeff8" stroke-width="1.2"/><circle cx="804.0" cy="78.25" r="2.3" stroke="#efeff8" stroke-width="1.2"/><circle cx="874.75" cy="78.5" r="2.3" stroke="#efeff8" stroke-width="1.2"/><circle cx="824.25" cy="90.75" r="7" stroke="#efeff8" stroke-width="1.3"/><path d="M821.25 90.75 L823.25 92.75 L827.25 88.75" stroke="#efeff8" stroke-width="1.2"/><g transform="translate(902.25,102) rotate(30)"><rect x="-6" y="-8" width="18" height="14" rx="2" stroke="#efeff8" stroke-width="1.3"/><path d="M-6 -4 H-12 L-15 1 V6 H-6" stroke="#efeff8" stroke-width="1.3"/><circle cx="-11" cy="7" r="2.5" stroke="#efeff8" stroke-width="1.2"/></g><g transform="translate(851.0,113) rotate(40)"><rect x="-12" y="-8" width="24" height="16" rx="2.5" stroke="#efeff8" stroke-width="1.4"/><rect x="-7" y="-4" width="10" height="6" rx="1" stroke="#efeff8" stroke-width="1.2"/><path d="M5 -4 H9" stroke="#efeff8" stroke-width="1.2"/></g><g transform="translate(723.5,41) rotate(-10)"><path d="M-9 5 V-2 L0 -8 L9 -2 V5 M-11 5 H11 M-3 5 V1 H3 V5" stroke="#efeff8" stroke-width="1.3"/></g><g transform="translate(831.0,37) rotate(-15)"><path d="M0 -11 L10 -5.5 V5.5 L0 11 L-10 5.5 V-5.5 Z M-10 -5.5 L0 0 L10 -5.5 M0 0 V11 M-5 -8 L5 -2.5" stroke="#efeff8" stroke-width="1.3" stroke-linejoin="round"/></g><g transform="translate(748.0,69.5) rotate(-15)"><path d="M0 -11 L10 -5.5 V5.5 L0 11 L-10 5.5 V-5.5 Z M-10 -5.5 L0 0 L10 -5.5 M0 0 V11 M-5 -8 L5 -2.5" stroke="#efeff8" stroke-width="1.3" stroke-linejoin="round"/></g><g transform="translate(857.25,63) rotate(-10)"><path d="M-9 5 V-2 L0 -8 L9 -2 V5 M-11 5 H11 M-3 5 V1 H3 V5" stroke="#efeff8" stroke-width="1.3"/></g><g transform="translate(967.0,9.5) rotate(-35)"><rect x="-12" y="-8" width="24" height="16" rx="2.5" stroke="#efeff8" stroke-width="1.4"/><rect x="-7" y="-4" width="10" height="6" rx="1" stroke="#efeff8" stroke-width="1.2"/><path d="M5 -4 H9" stroke="#efeff8" stroke-width="1.2"/></g><circle cx="1004.75" cy="22.75" r="2.3" stroke="#efeff8" stroke-width="1.2"/><circle cx="928.0" cy="19" r="2.3" stroke="#efeff8" stroke-width="1.2"/><path d="M980.0 31 Q985.0 31 984.0 37" stroke="#efeff8" stroke-width="1.2"/><g transform="translate(1018.5,54.5) rotate(-20)"><rect x="-10" y="-9" width="15" height="15" rx="2" stroke="#efeff8" stroke-width="1.3"/><path d="M7 -16 L8 8 L-11 9 M-5 -5 H0" stroke="#efeff8" stroke-width="1.3"/><circle cx="10" cy="9" r="2.5" stroke="#efeff8" stroke-width="1.2"/></g><circle cx="994.75" cy="50.25" r="2.3" stroke="#efeff8" stroke-width="1.2"/><circle cx="996.5" cy="81.5" r="2.3" stroke="#efeff8" stroke-width="1.2"/><circle cx="917.75" cy="78.25" r="2.3" stroke="#efeff8" stroke-width="1.2"/><circle cx="988.5" cy="78.5" r="2.3" stroke="#efeff8" stroke-width="1.2"/><circle cx="938.0" cy="90.75" r="7" stroke="#efeff8" stroke-width="1.3"/><path d="M935.0 90.75 L937.0 92.75 L941.0 88.75" stroke="#efeff8" stroke-width="1.2"/><g transform="translate(1016.0,102) rotate(30)"><rect x="-6" y="-8" width="18" height="14" rx="2" stroke="#efeff8" stroke-width="1.3"/><path d="M-6 -4 H-12 L-15 1 V6 H-6" stroke="#efeff8" stroke-width="1.3"/><circle cx="-11" cy="7" r="2.5" stroke="#efeff8" stroke-width="1.2"/></g><g transform="translate(964.75,113) rotate(40)"><rect x="-12" y="-8" width="24" height="16" rx="2.5" stroke="#efeff8" stroke-width="1.4"/><rect x="-7" y="-4" width="10" height="6" rx="1" stroke="#efeff8" stroke-width="1.2"/><path d="M5 -4 H9" stroke="#efeff8" stroke-width="1.2"/></g><g transform="translate(1080.75,9.5) rotate(-35)"><rect x="-12" y="-8" width="24" height="16" rx="2.5" stroke="#efeff8" stroke-width="1.4"/><rect x="-7" y="-4" width="10" height="6" rx="1" stroke="#efeff8" stroke-width="1.2"/><path d="M5 -4 H9" stroke="#efeff8" stroke-width="1.2"/></g><circle cx="1118.5" cy="22.75" r="2.3" stroke="#efeff8" stroke-width="1.2"/><circle cx="1041.75" cy="19" r="2.3" stroke="#efeff8" stroke-width="1.2"/><path d="M1093.75 31 Q1098.75 31 1097.75 37" stroke="#efeff8" stroke-width="1.2"/><g transform="translate(1132.25,54.5) rotate(-20)"><rect x="-10" y="-9" width="15" height="15" rx="2" stroke="#efeff8" stroke-width="1.3"/><path d="M7 -16 L8 8 L-11 9 M-5 -5 H0" stroke="#efeff8" stroke-width="1.3"/><circle cx="10" cy="9" r="2.5" stroke="#efeff8" stroke-width="1.2"/></g><circle cx="1108.5" cy="50.25" r="2.3" stroke="#efeff8" stroke-width="1.2"/><circle cx="1110.25" cy="81.5" r="2.3" stroke="#efeff8" stroke-width="1.2"/><circle cx="1031.5" cy="78.25" r="2.3" stroke="#efeff8" stroke-width="1.2"/><circle cx="1102.25" cy="78.5" r="2.3" stroke="#efeff8" stroke-width="1.2"/><circle cx="1051.75" cy="90.75" r="7" stroke="#efeff8" stroke-width="1.3"/><path d="M1048.75 90.75 L1050.75 92.75 L1054.75 88.75" stroke="#efeff8" stroke-width="1.2"/><g transform="translate(1129.75,102) rotate(30)"><rect x="-6" y="-8" width="18" height="14" rx="2" stroke="#efeff8" stroke-width="1.3"/><path d="M-6 -4 H-12 L-15 1 V6 H-6" stroke="#efeff8" stroke-width="1.3"/><circle cx="-11" cy="7" r="2.5" stroke="#efeff8" stroke-width="1.2"/></g><g transform="translate(1078.5,113) rotate(40)"><rect x="-12" y="-8" width="24" height="16" rx="2.5" stroke="#efeff8" stroke-width="1.4"/><rect x="-7" y="-4" width="10" height="6" rx="1" stroke="#efeff8" stroke-width="1.2"/><path d="M5 -4 H9" stroke="#efeff8" stroke-width="1.2"/></g><g transform="translate(951.0,41) rotate(-10)"><path d="M-9 5 V-2 L0 -8 L9 -2 V5 M-11 5 H11 M-3 5 V1 H3 V5" stroke="#efeff8" stroke-width="1.3"/></g><g transform="translate(1058.5,37) rotate(-15)"><path d="M0 -11 L10 -5.5 V5.5 L0 11 L-10 5.5 V-5.5 Z M-10 -5.5 L0 0 L10 -5.5 M0 0 V11 M-5 -8 L5 -2.5" stroke="#efeff8" stroke-width="1.3" stroke-linejoin="round"/></g><g transform="translate(975.5,69.5) rotate(-15)"><path d="M0 -11 L10 -5.5 V5.5 L0 11 L-10 5.5 V-5.5 Z M-10 -5.5 L0 0 L10 -5.5 M0 0 V11 M-5 -8 L5 -2.5" stroke="#efeff8" stroke-width="1.3" stroke-linejoin="round"/></g><g transform="translate(1084.75,63) rotate(-10)"><path d="M-9 5 V-2 L0 -8 L9 -2 V5 M-11 5 H11 M-3 5 V1 H3 V5" stroke="#efeff8" stroke-width="1.3"/></g><g transform="translate(1194.5,9.5) rotate(-35)"><rect x="-12" y="-8" width="24" height="16" rx="2.5" stroke="#efeff8" stroke-width="1.4"/><rect x="-7" y="-4" width="10" height="6" rx="1" stroke="#efeff8" stroke-width="1.2"/><path d="M5 -4 H9" stroke="#efeff8" stroke-width="1.2"/></g><circle cx="1232.25" cy="22.75" r="2.3" stroke="#efeff8" stroke-width="1.2"/><circle cx="1155.5" cy="19" r="2.3" stroke="#efeff8" stroke-width="1.2"/><path d="M1207.5 31 Q1212.5 31 1211.5 37" stroke="#efeff8" stroke-width="1.2"/><g transform="translate(1246.0,54.5) rotate(-20)"><rect x="-10" y="-9" width="15" height="15" rx="2" stroke="#efeff8" stroke-width="1.3"/><path d="M7 -16 L8 8 L-11 9 M-5 -5 H0" stroke="#efeff8" stroke-width="1.3"/><circle cx="10" cy="9" r="2.5" stroke="#efeff8" stroke-width="1.2"/></g><circle cx="1222.25" cy="50.25" r="2.3" stroke="#efeff8" stroke-width="1.2"/><circle cx="1224.0" cy="81.5" r="2.3" stroke="#efeff8" stroke-width="1.2"/><circle cx="1145.25" cy="78.25" r="2.3" stroke="#efeff8" stroke-width="1.2"/><circle cx="1216.0" cy="78.5" r="2.3" stroke="#efeff8" stroke-width="1.2"/><circle cx="1165.5" cy="90.75" r="7" stroke="#efeff8" stroke-width="1.3"/><path d="M1162.5 90.75 L1164.5 92.75 L1168.5 88.75" stroke="#efeff8" stroke-width="1.2"/><g transform="translate(1243.5,102) rotate(30)"><rect x="-6" y="-8" width="18" height="14" rx="2" stroke="#efeff8" stroke-width="1.3"/><path d="M-6 -4 H-12 L-15 1 V6 H-6" stroke="#efeff8" stroke-width="1.3"/><circle cx="-11" cy="7" r="2.5" stroke="#efeff8" stroke-width="1.2"/></g><g transform="translate(1192.25,113) rotate(40)"><rect x="-12" y="-8" width="24" height="16" rx="2.5" stroke="#efeff8" stroke-width="1.4"/><rect x="-7" y="-4" width="10" height="6" rx="1" stroke="#efeff8" stroke-width="1.2"/><path d="M5 -4 H9" stroke="#efeff8" stroke-width="1.2"/></g><g transform="translate(1308.25,9.5) rotate(-35)"><rect x="-12" y="-8" width="24" height="16" rx="2.5" stroke="#efeff8" stroke-width="1.4"/><rect x="-7" y="-4" width="10" height="6" rx="1" stroke="#efeff8" stroke-width="1.2"/><path d="M5 -4 H9" stroke="#efeff8" stroke-width="1.2"/></g><circle cx="1346.0" cy="22.75" r="2.3" stroke="#efeff8" stroke-width="1.2"/><circle cx="1269.25" cy="19" r="2.3" stroke="#efeff8" stroke-width="1.2"/><path d="M1321.25 31 Q1326.25 31 1325.25 37" stroke="#efeff8" stroke-width="1.2"/><g transform="translate(1359.75,54.5) rotate(-20)"><rect x="-10" y="-9" width="15" height="15" rx="2" stroke="#efeff8" stroke-width="1.3"/><path d="M7 -16 L8 8 L-11 9 M-5 -5 H0" stroke="#efeff8" stroke-width="1.3"/><circle cx="10" cy="9" r="2.5" stroke="#efeff8" stroke-width="1.2"/></g><circle cx="1336.0" cy="50.25" r="2.3" stroke="#efeff8" stroke-width="1.2"/><circle cx="1337.75" cy="81.5" r="2.3" stroke="#efeff8" stroke-width="1.2"/><circle cx="1259.0" cy="78.25" r="2.3" stroke="#efeff8" stroke-width="1.2"/><circle cx="1329.75" cy="78.5" r="2.3" stroke="#efeff8" stroke-width="1.2"/><circle cx="1279.25" cy="90.75" r="7" stroke="#efeff8" stroke-width="1.3"/><path d="M1276.25 90.75 L1278.25 92.75 L1282.25 88.75" stroke="#efeff8" stroke-width="1.2"/><g transform="translate(1357.25,102) rotate(30)"><rect x="-6" y="-8" width="18" height="14" rx="2" stroke="#efeff8" stroke-width="1.3"/><path d="M-6 -4 H-12 L-15 1 V6 H-6" stroke="#efeff8" stroke-width="1.3"/><circle cx="-11" cy="7" r="2.5" stroke="#efeff8" stroke-width="1.2"/></g><g transform="translate(1306.0,113) rotate(40)"><rect x="-12" y="-8" width="24" height="16" rx="2.5" stroke="#efeff8" stroke-width="1.4"/><rect x="-7" y="-4" width="10" height="6" rx="1" stroke="#efeff8" stroke-width="1.2"/><path d="M5 -4 H9" stroke="#efeff8" stroke-width="1.2"/></g><g transform="translate(1178.5,41) rotate(-10)"><path d="M-9 5 V-2 L0 -8 L9 -2 V5 M-11 5 H11 M-3 5 V1 H3 V5" stroke="#efeff8" stroke-width="1.3"/></g><g transform="translate(1286.0,37) rotate(-15)"><path d="M0 -11 L10 -5.5 V5.5 L0 11 L-10 5.5 V-5.5 Z M-10 -5.5 L0 0 L10 -5.5 M0 0 V11 M-5 -8 L5 -2.5" stroke="#efeff8" stroke-width="1.3" stroke-linejoin="round"/></g><g transform="translate(1203.0,69.5) rotate(-15)"><path d="M0 -11 L10 -5.5 V5.5 L0 11 L-10 5.5 V-5.5 Z M-10 -5.5 L0 0 L10 -5.5 M0 0 V11 M-5 -8 L5 -2.5" stroke="#efeff8" stroke-width="1.3" stroke-linejoin="round"/></g><g transform="translate(1312.25,63) rotate(-10)"><path d="M-9 5 V-2 L0 -8 L9 -2 V5 M-11 5 H11 M-3 5 V1 H3 V5" stroke="#efeff8" stroke-width="1.3"/></g><g transform="translate(1422.0,9.5) rotate(-35)"><rect x="-12" y="-8" width="24" height="16" rx="2.5" stroke="#efeff8" stroke-width="1.4"/><rect x="-7" y="-4" width="10" height="6" rx="1" stroke="#efeff8" stroke-width="1.2"/><path d="M5 -4 H9" stroke="#efeff8" stroke-width="1.2"/></g><circle cx="1459.75" cy="22.75" r="2.3" stroke="#efeff8" stroke-width="1.2"/><circle cx="1383.0" cy="19" r="2.3" stroke="#efeff8" stroke-width="1.2"/><path d="M1435.0 31 Q1440.0 31 1439.0 37" stroke="#efeff8" stroke-width="1.2"/><g transform="translate(1473.5,54.5) rotate(-20)"><rect x="-10" y="-9" width="15" height="15" rx="2" stroke="#efeff8" stroke-width="1.3"/><path d="M7 -16 L8 8 L-11 9 M-5 -5 H0" stroke="#efeff8" stroke-width="1.3"/><circle cx="10" cy="9" r="2.5" stroke="#efeff8" stroke-width="1.2"/></g><circle cx="1449.75" cy="50.25" r="2.3" stroke="#efeff8" stroke-width="1.2"/><circle cx="1451.5" cy="81.5" r="2.3" stroke="#efeff8" stroke-width="1.2"/><circle cx="1372.75" cy="78.25" r="2.3" stroke="#efeff8" stroke-width="1.2"/><circle cx="1443.5" cy="78.5" r="2.3" stroke="#efeff8" stroke-width="1.2"/><circle cx="1393.0" cy="90.75" r="7" stroke="#efeff8" stroke-width="1.3"/><path d="M1390.0 90.75 L1392.0 92.75 L1396.0 88.75" stroke="#efeff8" stroke-width="1.2"/><g transform="translate(1471.0,102) rotate(30)"><rect x="-6" y="-8" width="18" height="14" rx="2" stroke="#efeff8" stroke-width="1.3"/><path d="M-6 -4 H-12 L-15 1 V6 H-6" stroke="#efeff8" stroke-width="1.3"/><circle cx="-11" cy="7" r="2.5" stroke="#efeff8" stroke-width="1.2"/></g><g transform="translate(1419.75,113) rotate(40)"><rect x="-12" y="-8" width="24" height="16" rx="2.5" stroke="#efeff8" stroke-width="1.4"/><rect x="-7" y="-4" width="10" height="6" rx="1" stroke="#efeff8" stroke-width="1.2"/><path d="M5 -4 H9" stroke="#efeff8" stroke-width="1.2"/></g><g transform="translate(1535.75,9.5) rotate(-35)"><rect x="-12" y="-8" width="24" height="16" rx="2.5" stroke="#efeff8" stroke-width="1.4"/><rect x="-7" y="-4" width="10" height="6" rx="1" stroke="#efeff8" stroke-width="1.2"/><path d="M5 -4 H9" stroke="#efeff8" stroke-width="1.2"/></g><circle cx="1573.5" cy="22.75" r="2.3" stroke="#efeff8" stroke-width="1.2"/><circle cx="1496.75" cy="19" r="2.3" stroke="#efeff8" stroke-width="1.2"/><path d="M1548.75 31 Q1553.75 31 1552.75 37" stroke="#efeff8" stroke-width="1.2"/><g transform="translate(1587.25,54.5) rotate(-20)"><rect x="-10" y="-9" width="15" height="15" rx="2" stroke="#efeff8" stroke-width="1.3"/><path d="M7 -16 L8 8 L-11 9 M-5 -5 H0" stroke="#efeff8" stroke-width="1.3"/><circle cx="10" cy="9" r="2.5" stroke="#efeff8" stroke-width="1.2"/></g><circle cx="1563.5" cy="50.25" r="2.3" stroke="#efeff8" stroke-width="1.2"/><circle cx="1565.25" cy="81.5" r="2.3" stroke="#efeff8" stroke-width="1.2"/><circle cx="1486.5" cy="78.25" r="2.3" stroke="#efeff8" stroke-width="1.2"/><circle cx="1557.25" cy="78.5" r="2.3" stroke="#efeff8" stroke-width="1.2"/><circle cx="1506.75" cy="90.75" r="7" stroke="#efeff8" stroke-width="1.3"/><path d="M1503.75 90.75 L1505.75 92.75 L1509.75 88.75" stroke="#efeff8" stroke-width="1.2"/><g transform="translate(1584.75,102) rotate(30)"><rect x="-6" y="-8" width="18" height="14" rx="2" stroke="#efeff8" stroke-width="1.3"/><path d="M-6 -4 H-12 L-15 1 V6 H-6" stroke="#efeff8" stroke-width="1.3"/><circle cx="-11" cy="7" r="2.5" stroke="#efeff8" stroke-width="1.2"/></g><g transform="translate(1533.5,113) rotate(40)"><rect x="-12" y="-8" width="24" height="16" rx="2.5" stroke="#efeff8" stroke-width="1.4"/><rect x="-7" y="-4" width="10" height="6" rx="1" stroke="#efeff8" stroke-width="1.2"/><path d="M5 -4 H9" stroke="#efeff8" stroke-width="1.2"/></g><g transform="translate(1406.0,41) rotate(-10)"><path d="M-9 5 V-2 L0 -8 L9 -2 V5 M-11 5 H11 M-3 5 V1 H3 V5" stroke="#efeff8" stroke-width="1.3"/></g><g transform="translate(1513.5,37) rotate(-15)"><path d="M0 -11 L10 -5.5 V5.5 L0 11 L-10 5.5 V-5.5 Z M-10 -5.5 L0 0 L10 -5.5 M0 0 V11 M-5 -8 L5 -2.5" stroke="#efeff8" stroke-width="1.3" stroke-linejoin="round"/></g><g transform="translate(1430.5,69.5) rotate(-15)"><path d="M0 -11 L10 -5.5 V5.5 L0 11 L-10 5.5 V-5.5 Z M-10 -5.5 L0 0 L10 -5.5 M0 0 V11 M-5 -8 L5 -2.5" stroke="#efeff8" stroke-width="1.3" stroke-linejoin="round"/></g><g transform="translate(1539.75,63) rotate(-10)"><path d="M-9 5 V-2 L0 -8 L9 -2 V5 M-11 5 H11 M-3 5 V1 H3 V5" stroke="#efeff8" stroke-width="1.3"/></g></g></svg><div style="position:absolute;left:193px;top:53px;width:40px;height:40px;background:#ffffff;border:1px solid #e6e7f0;border-radius:7px;box-sizing:border-box;"></div><svg style="position:absolute;left:204px;top:64px;" width="18" height="18" viewBox="0 0 18 18" fill="none"><path d="M5.8 16.4 H3.9 Q2.2 16.4 2.2 14.7 V3.2 Q2.2 1.6 3.9 1.6 H10.9 Q12.6 1.6 12.6 3.2 V6.8" stroke="#7c7f92" stroke-width="1.4"/><path d="M6.9 16.4 V8.6 Q6.9 6.9 8.6 6.9 H14.3 Q16 6.9 16 8.6 V14.7 Q16 16.4 14.3 16.4 Z" stroke="#7c7f92" stroke-width="1.4"/><path d="M10 16.4 V14 M12.8 16.4 V14" stroke="#7c7f92" stroke-width="1.2"/></svg><div style="position:absolute;left:239px;top:51px;width:98px;height:19px;background:#ffffff;"></div><div style="position:absolute;left:237px;top:69px;width:112px;height:19px;background:#ffffff;"></div><div style="position:absolute;left:243px;top:88px;width:99px;height:13px;background:#ffffff;"></div><div class="t" style="left:191px;top:116.74px;font-size:13.3px;color:#2e3144;font-weight:400;">Dashboard</div><div class="t" style="left:271px;top:117.20px;font-size:13.7px;color:#2e3144;font-weight:400;">Getting Started</div><div style="position:absolute;left:191px;top:144px;width:65px;height:2px;background:#3f7be0;border-radius:1px;"></div><svg style="position:absolute;left:212px;top:166px;" width="12" height="17" viewBox="0 0 12 17" fill="none"><path d="M8.6 0.6 L1.6 9.6 L7.6 9.3 Z M4.2 7.2 L4.3 16.2 L10.6 6.9 Z" fill="#ef6350" stroke="#f07a45" stroke-width="0.6" stroke-linejoin="round"/></svg><div class="t" style="left:226.7px;top:167.57px;font-size:13.5px;color:#3a3d50;font-weight:400;">Overview</div><div style="position:absolute;left:210px;top:193px;width:203px;height:105px;background:#fff;border:1px solid #e7e8f2;border-radius:8px;box-sizing:border-box;overflow:hidden;box-shadow:0 1px 2px rgba(30,35,90,0.04)"><div style="position:absolute;right:2px;bottom:2px;width:0;height:0;border-style:solid;border-width:0 0 45px 45px;border-color:transparent transparent #fef6e9 transparent;border-bottom-right-radius:6px"></div></div><svg style="position:absolute;left:390px;top:272.8px;" width="15" height="16" viewBox="0 0 15 16" fill="none"><circle cx="7" cy="8.5" r="5" stroke="#f8ab2a" stroke-width="1.3"/><path d="M5 1.5 H9 M7 1.5 V3.5 M7 6 V8.8 L8.5 10" stroke="#f8ab2a" stroke-width="1.3"/></svg><div class="t" style="left:223.5px;top:210.08px;font-size:10.3px;color:#43465a;font-weight:400;letter-spacing:0.1px;-webkit-text-stroke:0.1px #43465a;">PENDING ORDERS</div><div class="t" style="left:223.3px;top:240.00px;font-size:21.5px;color:#1c1f33;font-weight:400;">27</div><div class="t" style="left:223.5px;top:271.07px;font-size:11.5px;color:#5a5d6f;font-weight:400;">To Be Confirmed</div><div style="position:absolute;left:426.5px;top:193px;width:203px;height:105px;background:#fff;border:1px solid #e7e8f2;border-radius:8px;box-sizing:border-box;overflow:hidden;box-shadow:0 1px 2px rgba(30,35,90,0.04)"><div style="position:absolute;right:2px;bottom:2px;width:0;height:0;border-style:solid;border-width:0 0 45px 45px;border-color:transparent transparent #fef6e9 transparent;border-bottom-right-radius:6px"></div></div><svg style="position:absolute;left:606.5px;top:272.8px;" width="15" height="16" viewBox="0 0 15 16" fill="none"><path d="M3 5 A5 5 0 1 1 2.5 9.5" stroke="#f8ab2a" stroke-width="1.3"/><path d="M2 2 V5.5 H5.5" stroke="#f8ab2a" stroke-width="1.3"/></svg><div class="t" style="left:440.0px;top:210.08px;font-size:10.3px;color:#43465a;font-weight:400;letter-spacing:0.1px;-webkit-text-stroke:0.1px #43465a;">RETURN REQUESTS</div><div class="t" style="left:439.8px;top:240.00px;font-size:21.5px;color:#1c1f33;font-weight:400;">0</div><div class="t" style="left:440.0px;top:271.07px;font-size:11.5px;color:#5a5d6f;font-weight:400;">To Be Reviewed</div><div style="position:absolute;left:643px;top:193px;width:203px;height:105px;background:#fff;border:1px solid #e7e8f2;border-radius:8px;box-sizing:border-box;overflow:hidden;box-shadow:0 1px 2px rgba(30,35,90,0.04)"><div style="position:absolute;right:2px;bottom:2px;width:0;height:0;border-style:solid;border-width:0 0 45px 45px;border-color:transparent transparent #fef6e9 transparent;border-bottom-right-radius:6px"></div></div><svg style="position:absolute;left:823px;top:272.8px;" width="15" height="16" viewBox="0 0 15 16" fill="none"><rect x="0.8" y="1.5" width="10.4" height="9.4" rx="1.6" stroke="#f8ab2a" stroke-width="1.2"/><path d="M3.4 4.5 H7.2 M3.4 4.5 V6.3" stroke="#f8ab2a" stroke-width="1.2"/><circle cx="10.4" cy="9.8" r="3.3" stroke="#f8ab2a" stroke-width="1.2" fill="#fef6e9"/><circle cx="10.2" cy="9.6" r="0.9" fill="#f8ab2a"/></svg><div class="t" style="left:656.5px;top:210.08px;font-size:10.3px;color:#43465a;font-weight:400;letter-spacing:0.1px;-webkit-text-stroke:0.1px #43465a;">PENDING CANCEL REQUEST</div><div class="t" style="left:656.3px;top:240.00px;font-size:21.5px;color:#1c1f33;font-weight:400;">1</div><div class="t" style="left:656.5px;top:271.07px;font-size:11.5px;color:#5a5d6f;font-weight:400;">To Be Processed</div><div style="position:absolute;left:859px;top:193px;width:203px;height:105px;background:#fff;border:1px solid #e7e8f2;border-radius:8px;box-sizing:border-box;overflow:hidden;box-shadow:0 1px 2px rgba(30,35,90,0.04)"><div style="position:absolute;right:2px;bottom:2px;width:0;height:0;border-style:solid;border-width:0 0 45px 45px;border-color:transparent transparent #fef6e9 transparent;border-bottom-right-radius:6px"></div></div><svg style="position:absolute;left:1039px;top:272.8px;" width="15" height="16" viewBox="0 0 15 16" fill="none"><rect x="1.5" y="3" width="12" height="9" rx="1.5" stroke="#f8ab2a" stroke-width="1.3"/><circle cx="7.5" cy="7.5" r="1.6" stroke="#f8ab2a" stroke-width="1.2"/></svg><div class="t" style="left:872.5px;top:210.08px;font-size:10.3px;color:#43465a;font-weight:400;letter-spacing:0.1px;-webkit-text-stroke:0.1px #43465a;">YET TO RECEIVE PAYMENTS</div><div class="t" style="left:872.3px;top:240.00px;font-size:21.5px;color:#1c1f33;font-weight:400;">2</div><div class="t" style="left:872.5px;top:271.07px;font-size:11.5px;color:#5a5d6f;font-weight:400;">To Be Received</div><div style="position:absolute;left:1075.5px;top:193px;width:203px;height:105px;background:#fff;border:1px solid #e7e8f2;border-radius:8px;box-sizing:border-box;overflow:hidden;box-shadow:0 1px 2px rgba(30,35,90,0.04)"><div style="position:absolute;right:2px;bottom:2px;width:0;height:0;border-style:solid;border-width:0 0 45px 45px;border-color:transparent transparent #eef0fb transparent;border-bottom-right-radius:6px"></div></div><svg style="position:absolute;left:1255.5px;top:272.8px;" width="15" height="16" viewBox="0 0 15 16" fill="none"><path d="M9 13.5 H3 Q1.5 13.5 1.5 12 V3 Q1.5 1.5 3 1.5 H10 Q11.5 1.5 11.5 3 V6" stroke="#3f73d6" stroke-width="1.3"/><path d="M5 1.5 V5 H8 V1.5" stroke="#3f73d6" stroke-width="1.2"/><circle cx="11" cy="11" r="3.3" stroke="#3f73d6" stroke-width="1.2" fill="#eef0fb"/><path d="M9.8 10.5 L11 11.7 L12.2 10.5" stroke="#3f73d6" stroke-width="1"/></svg><div class="t" style="left:1089.0px;top:210.08px;font-size:10.3px;color:#43465a;font-weight:400;letter-spacing:0.1px;-webkit-text-stroke:0.1px #43465a;">OUT OF STOCK ITEMS</div><div class="t" style="left:1088.8px;top:240.00px;font-size:21.5px;color:#1c1f33;font-weight:400;">0</div><div class="t" style="left:1089.0px;top:271.07px;font-size:11.5px;color:#5a5d6f;font-weight:400;">To Be Restocked</div><div style="position:absolute;left:209.5px;top:323px;width:704px;height:379px;background:#fff;border:1px solid #e7e8f2;border-radius:9px;box-sizing:border-box;overflow:hidden;box-shadow:0 2px 6px rgba(30,35,90,0.045)"><div style="position:absolute;left:0;top:0;right:0;height:39px;background:#f7f7fb;border-bottom:1px solid #e9eaf2"></div></div><div class="t" style="left:227.0px;top:337.22px;font-size:12.5px;color:#2f3245;font-weight:400;-webkit-text-stroke:0.18px #2f3245;">Sales Summary</div><div class="t" style="left:883.5px;top:338.57px;font-size:11.5px;color:#54576a;font-weight:400;transform:translateX(-100%);">This Month</div><svg style="position:absolute;left:888.5px;top:343px;" width="8" height="6" viewBox="0 0 8 6" fill="none"><path d="M1.2 1.5 L4 4.2 L6.8 1.5" stroke="#7d8094" stroke-width="1.1"/></svg><div style="position:absolute;left:939px;top:323px;width:340px;height:379px;background:#fff;border:1px solid #e7e8f2;border-radius:9px;box-sizing:border-box;overflow:hidden;box-shadow:0 2px 6px rgba(30,35,90,0.045)"><div style="position:absolute;left:0;top:0;right:0;height:39px;background:#f7f7fb;border-bottom:1px solid #e9eaf2"></div></div><div class="t" style="left:956.5px;top:337.22px;font-size:12.5px;color:#2f3245;font-weight:400;-webkit-text-stroke:0.18px #2f3245;">Shipping Overview</div><div class="t" style="left:1249px;top:338.57px;font-size:11.5px;color:#54576a;font-weight:400;transform:translateX(-100%);">This Month</div><svg style="position:absolute;left:1254px;top:343px;" width="8" height="6" viewBox="0 0 8 6" fill="none"><path d="M1.2 1.5 L4 4.2 L6.8 1.5" stroke="#7d8094" stroke-width="1.1"/></svg><div style="position:absolute;left:210px;top:727px;width:339px;height:100px;background:#fff;border:1px solid #e7e8f2;border-radius:9px;box-sizing:border-box;overflow:hidden;box-shadow:0 2px 6px rgba(30,35,90,0.045)"><div style="position:absolute;left:0;top:0;right:0;height:39px;background:#f7f7fb;border-bottom:1px solid #e9eaf2"></div></div><div class="t" style="left:227.5px;top:741.22px;font-size:12.5px;color:#2f3245;font-weight:400;-webkit-text-stroke:0.18px #2f3245;">Online Store Visits</div><div class="t" style="left:519px;top:742.57px;font-size:11.5px;color:#54576a;font-weight:400;transform:translateX(-100%);">This Month</div><svg style="position:absolute;left:524px;top:747px;" width="8" height="6" viewBox="0 0 8 6" fill="none"><path d="M1.2 1.5 L4 4.2 L6.8 1.5" stroke="#7d8094" stroke-width="1.1"/></svg><div style="position:absolute;left:575px;top:727px;width:339px;height:100px;background:#fff;border:1px solid #e7e8f2;border-radius:9px;box-sizing:border-box;overflow:hidden;box-shadow:0 2px 6px rgba(30,35,90,0.045)"><div style="position:absolute;left:0;top:0;right:0;height:39px;background:#f7f7fb;border-bottom:1px solid #e9eaf2"></div></div><div class="t" style="left:592.5px;top:741.22px;font-size:12.5px;color:#2f3245;font-weight:400;-webkit-text-stroke:0.18px #2f3245;">Top Pages By Views</div><div class="t" style="left:884px;top:742.57px;font-size:11.5px;color:#54576a;font-weight:400;transform:translateX(-100%);">This Month</div><svg style="position:absolute;left:889px;top:747px;" width="8" height="6" viewBox="0 0 8 6" fill="none"><path d="M1.2 1.5 L4 4.2 L6.8 1.5" stroke="#7d8094" stroke-width="1.1"/></svg><div style="position:absolute;left:940px;top:727px;width:339px;height:100px;background:#fff;border:1px solid #e7e8f2;border-radius:9px;box-sizing:border-box;overflow:hidden;box-shadow:0 2px 6px rgba(30,35,90,0.045)"><div style="position:absolute;left:0;top:0;right:0;height:39px;background:#f7f7fb;border-bottom:1px solid #e9eaf2"></div></div><div class="t" style="left:957.5px;top:741.22px;font-size:12.5px;color:#2f3245;font-weight:400;-webkit-text-stroke:0.18px #2f3245;">Top Items</div><div class="t" style="left:1249px;top:742.57px;font-size:11.5px;color:#54576a;font-weight:400;transform:translateX(-100%);">This Month</div><svg style="position:absolute;left:1254px;top:747px;" width="8" height="6" viewBox="0 0 8 6" fill="none"><path d="M1.2 1.5 L4 4.2 L6.8 1.5" stroke="#7d8094" stroke-width="1.1"/></svg><div class="t" style="left:227px;top:387.49px;font-size:17.5px;color:#1c1f33;font-weight:400;">13</div><div style="position:absolute;left:782.5px;top:381px;width:48.5px;height:24px;background:#eef1fb;border:1px solid #4a86e0;border-radius:12px;box-sizing:border-box;"></div><div class="t" style="left:806.7px;top:388.99px;font-size:11px;color:#3d78d8;font-weight:400;transform:translateX(-50%);">Order</div><div style="position:absolute;left:837px;top:381px;width:59.5px;height:24px;background:#fff;border:1px solid #dcdeea;border-radius:12px;box-sizing:border-box;"></div><div class="t" style="left:866.7px;top:388.99px;font-size:11px;color:#3b3e50;font-weight:400;transform:translateX(-50%);">Amount</div><svg style="position:absolute;left:0;top:0" width="1600" height="780" viewBox="0 0 1600 780" fill="none"><line x1="261.2" y1="590.03" x2="880" y2="590.03" stroke="#dcdde9" stroke-width="1" stroke-dasharray="1.6 2.6"/><line x1="261.2" y1="553.36" x2="880" y2="553.36" stroke="#dcdde9" stroke-width="1" stroke-dasharray="1.6 2.6"/><line x1="261.2" y1="516.69" x2="880" y2="516.69" stroke="#dcdde9" stroke-width="1" stroke-dasharray="1.6 2.6"/><line x1="261.2" y1="480.02" x2="880" y2="480.02" stroke="#dcdde9" stroke-width="1" stroke-dasharray="1.6 2.6"/><line x1="261.2" y1="443.35" x2="880" y2="443.35" stroke="#dcdde9" stroke-width="1" stroke-dasharray="1.6 2.6"/><defs><linearGradient id="gf" x1="0" y1="0" x2="0" y2="1"><stop offset="0" stop-color="#2eb67d" stop-opacity="0.09"/><stop offset="1" stop-color="#2eb67d" stop-opacity="0.02"/></linearGradient></defs><path d="M261.20,443.35 C268.31,464.74 275.42,486.13 282.53,516.69 C289.64,547.25 296.75,626.70 303.86,626.70 C310.97,626.70 318.08,626.70 325.19,626.70 C332.30,626.70 339.41,626.70 346.52,626.70 C353.63,626.70 360.74,443.35 367.85,443.35 C374.96,443.35 382.07,626.70 389.18,626.70 C396.29,626.70 403.40,626.70 410.51,626.70 C417.62,626.70 424.73,626.70 431.84,626.70 C438.95,626.70 446.06,626.70 453.17,626.70 C460.28,626.70 467.39,626.70 474.50,626.70 C481.61,626.70 488.72,626.70 495.83,626.70 C502.94,626.70 510.05,626.70 517.16,626.70 C524.27,626.70 531.38,626.70 538.49,626.70 C545.60,626.70 552.71,626.70 559.82,626.70 C566.93,626.70 574.04,626.70 581.15,626.70 C588.26,626.70 595.37,626.70 602.48,626.70 C609.59,626.70 616.70,626.70 623.81,626.70 C630.92,626.70 638.03,626.70 645.14,626.70 C652.25,626.70 659.36,626.70 666.47,626.70 C673.58,626.70 680.69,626.70 687.80,626.70 C694.91,626.70 702.02,626.70 709.13,626.70 C716.24,626.70 723.35,626.70 730.46,626.70 C737.57,626.70 744.68,626.70 751.79,626.70 C758.90,626.70 766.01,626.70 773.12,626.70 C780.23,626.70 787.34,626.70 794.45,626.70 C801.56,626.70 808.67,626.70 815.78,626.70 C822.89,626.70 830.00,626.70 837.11,626.70 C844.22,626.70 851.33,626.70 858.44,626.70 C865.55,626.70 872.66,626.70 879.77,626.70 L879.77,626.7 L261.2,626.7 Z" fill="url(#gf)"/><line x1="261.2" y1="442.35" x2="261.2" y2="626.7" stroke="#e3e4f0" stroke-width="1"/><path d="M261.20,443.35 C268.31,464.74 275.42,486.13 282.53,516.69 C289.64,547.25 296.75,626.70 303.86,626.70 C310.97,626.70 318.08,626.70 325.19,626.70 C332.30,626.70 339.41,626.70 346.52,626.70 C353.63,626.70 360.74,443.35 367.85,443.35 C374.96,443.35 382.07,626.70 389.18,626.70 C396.29,626.70 403.40,626.70 410.51,626.70 C417.62,626.70 424.73,626.70 431.84,626.70 C438.95,626.70 446.06,626.70 453.17,626.70 C460.28,626.70 467.39,626.70 474.50,626.70 C481.61,626.70 488.72,626.70 495.83,626.70 C502.94,626.70 510.05,626.70 517.16,626.70 C524.27,626.70 531.38,626.70 538.49,626.70 C545.60,626.70 552.71,626.70 559.82,626.70 C566.93,626.70 574.04,626.70 581.15,626.70 C588.26,626.70 595.37,626.70 602.48,626.70 C609.59,626.70 616.70,626.70 623.81,626.70 C630.92,626.70 638.03,626.70 645.14,626.70 C652.25,626.70 659.36,626.70 666.47,626.70 C673.58,626.70 680.69,626.70 687.80,626.70 C694.91,626.70 702.02,626.70 709.13,626.70 C716.24,626.70 723.35,626.70 730.46,626.70 C737.57,626.70 744.68,626.70 751.79,626.70 C758.90,626.70 766.01,626.70 773.12,626.70 C780.23,626.70 787.34,626.70 794.45,626.70 C801.56,626.70 808.67,626.70 815.78,626.70 C822.89,626.70 830.00,626.70 837.11,626.70 C844.22,626.70 851.33,626.70 858.44,626.70 C865.55,626.70 872.66,626.70 879.77,626.70 L880,626.7" stroke="#45bb87" stroke-width="1.3" fill="none"/><path d="M304.9,626.7 H345.5 M390.2,626.7 H880" stroke="#a9dec7" stroke-width="1.5"/><line x1="261.2" y1="627.7" x2="880" y2="627.7" stroke="#e6e7f2" stroke-width="1"/></svg><div class="t" style="left:250px;top:622.10px;font-size:9.8px;color:#555869;font-weight:400;transform:translateX(-50%);">0</div><div class="t" style="left:250px;top:585.43px;font-size:9.8px;color:#555869;font-weight:400;transform:translateX(-50%);">1</div><div class="t" style="left:250px;top:548.76px;font-size:9.8px;color:#555869;font-weight:400;transform:translateX(-50%);">2</div><div class="t" style="left:250px;top:512.09px;font-size:9.8px;color:#555869;font-weight:400;transform:translateX(-50%);">3</div><div class="t" style="left:250px;top:475.42px;font-size:9.8px;color:#555869;font-weight:400;transform:translateX(-50%);">4</div><div class="t" style="left:250px;top:438.75px;font-size:9.8px;color:#555869;font-weight:400;transform:translateX(-50%);">5</div><div class="t" style="left:346.52px;top:633.80px;font-size:9.8px;color:#555869;font-weight:400;transform:translateX(-50%);">05</div><div class="t" style="left:346.52px;top:643.80px;font-size:8.5px;color:#555869;font-weight:400;transform:translateX(-50%);">Apr</div><div class="t" style="left:495.83px;top:633.80px;font-size:9.8px;color:#555869;font-weight:400;transform:translateX(-50%);">12</div><div class="t" style="left:495.83px;top:643.80px;font-size:8.5px;color:#555869;font-weight:400;transform:translateX(-50%);">Apr</div><div class="t" style="left:645.1399999999999px;top:633.80px;font-size:9.8px;color:#555869;font-weight:400;transform:translateX(-50%);">19</div><div class="t" style="left:645.1399999999999px;top:643.80px;font-size:8.5px;color:#555869;font-weight:400;transform:translateX(-50%);">Apr</div><div class="t" style="left:794.45px;top:633.80px;font-size:9.8px;color:#555869;font-weight:400;transform:translateX(-50%);">26</div><div class="t" style="left:794.45px;top:643.80px;font-size:8.5px;color:#555869;font-weight:400;transform:translateX(-50%);">Apr</div><svg style="position:absolute;left:940px;top:430px;" width="200" height="200" viewBox="0 0 200 200" fill="none"><circle cx="106.6" cy="99.6" r="73.6" stroke="#fcb431" stroke-width="21.2" fill="none"/><line x1="106.6" y1="14.5" x2="106.6" y2="37" stroke="#fde4b6" stroke-width="0.6"/></svg><div class="t" style="left:1046.6px;top:517.33px;font-size:10px;color:#3a3d50;font-weight:400;transform:translateX(-50%);">ALL SHIPPINGS</div><div class="t" style="left:1046.6px;top:536.17px;font-size:20px;color:#1c1f33;font-weight:400;transform:translateX(-50%);">13</div><div style="position:absolute;left:1157px;top:481.1px;width:9px;height:9px;background:#fcb431;border-radius:2px;"></div><div class="t" style="left:1177.6px;top:480.37px;font-size:12.2px;color:#4a4d5f;font-weight:400;">Pending</div><div style="position:absolute;left:1157px;top:512.47px;width:9px;height:9px;background:#4a86e8;border-radius:2px;"></div><div class="t" style="left:1177.6px;top:511.74px;font-size:12.2px;color:#4a4d5f;font-weight:400;">Packed</div><div style="position:absolute;left:1157px;top:543.84px;width:9px;height:9px;background:#4a86e8;border-radius:2px;"></div><div class="t" style="left:1177.6px;top:543.11px;font-size:12.2px;color:#4a4d5f;font-weight:400;">Shipped</div><div style="position:absolute;left:1157px;top:575.21px;width:9px;height:9px;background:#2eb67d;border-radius:2px;"></div><div class="t" style="left:1177.6px;top:574.48px;font-size:12.2px;color:#4a4d5f;font-weight:400;">Delivered</div><div style="position:absolute;left:1382px;top:738px;width:179px;height:60px;background:#ebfaf2;border:2px solid #ffffff;border-radius:9px;box-sizing:border-box;box-shadow:0 0 18px rgba(40,50,90,0.10)"></div><div style="position:absolute;left:1387.5px;top:744.5px;width:42px;height:40px;background:#ffffff;border-radius:5px;"></div><svg style="position:absolute;left:1393px;top:752px;" width="32" height="28" viewBox="0 0 32 28" fill="none"><path d="M17 5 Q17 1 24 1 Q31 1 31 6 Q31 10 27 11 L28.5 14 L24 11.3 Q17 11 17 6" fill="#8db4e6" stroke="#4a6fa8" stroke-width="0.8"/><rect x="5" y="9" width="17" height="11" rx="1.5" fill="#ffffff" stroke="#4a4d60" stroke-width="1.2"/><path d="M9 13 H16 M10 16 H14" stroke="#e8a03a" stroke-width="1"/><path d="M1.5 22 Q4.5 22 4.5 25 M1.5 19 Q7.5 19 7.5 25" stroke="#4a4d60" stroke-width="1"/><circle cx="2" cy="25" r="1" fill="#4a4d60"/></svg><div class="t" style="left:1438px;top:751.81px;font-size:11.8px;color:#23263a;font-weight:400;-webkit-text-stroke:0.4px #23263a;">Need help setting up</div><div class="t" style="left:1438px;top:768.81px;font-size:11.8px;color:#23263a;font-weight:400;-webkit-text-stroke:0.4px #23263a;">your store?</div><div style="position:absolute;left:1575px;top:760px;width:26px;height:26px;border-radius:50%;background:#dfe1ec"></div><svg style="position:absolute;left:1584px;top:768px;" width="8" height="10" viewBox="0 0 8 10" fill="none"><path d="M2 1 L6 5 L2 9" stroke="#2a2d40" stroke-width="1.5"/></svg><svg style="position:absolute;left:117px;top:127px;" width="68" height="52" viewBox="0 0 68 52" fill="none"><path d="M1.1 26.7 L36 1.1 L36 13 L65 13 Q66.8 13 66.8 14.8 L66.8 37.5 Q66.8 39.3 65 39.3 L36 39.3 L36 51.1 Z" fill="#ec1c24" stroke="#ec1c24" stroke-width="0.5" stroke-linejoin="round"/></svg><div class="t" style="left:194.2px;top:145.20px;font-size:16.3px;color:#e8121c;font-weight:700;letter-spacing:0.8px;-webkit-text-stroke:0.45px #e8121c;">Click Here</div>
</body></html>
